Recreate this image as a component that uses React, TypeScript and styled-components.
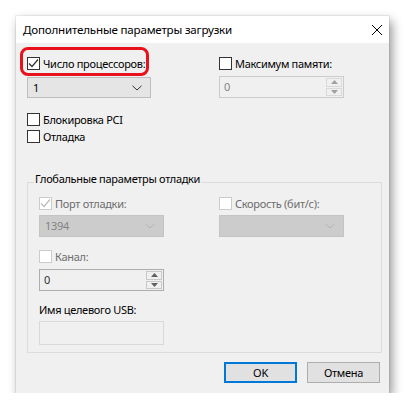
import React from "react";
import styled, { createGlobalStyle, css } from "styled-components";

const FS = "11px";
const LS = "-0.3px";

const GlobalStyle = createGlobalStyle`
  html, body { margin: 0; padding: 0; background: #ffffff; }
  body {
    font-family: "Noto Sans", "Open Sans", sans-serif;
    font-size: ${FS};
    letter-spacing: ${LS};
    color: #000;
    -webkit-font-smoothing: antialiased;
  }
`;

const DialogWindow = styled.div`
  position: relative;
  margin: 16px 0 0 16px;
  width: 373px;
  height: 377px;
  display: flex;
  flex-direction: column;
  background: #f0f0f0;
  box-shadow: 0 0 0 1px rgba(0, 0, 0, 0.06), 3px 5px 10px rgba(0, 0, 0, 0.42);
`;

const TitleBar = styled.div`
  height: 27px;
  flex: none;
  background: #ffffff;
  display: flex;
  align-items: center;
  justify-content: space-between;
  padding-left: 7px;
`;

const TitleText = styled.span`
  font-size: 11.6px;
  letter-spacing: -0.2px;
  line-height: 16px;
  color: #000;
`;

const CloseButton = styled.div`
  width: 24px;
  height: 27px;
  display: flex;
  align-items: center;
  justify-content: center;
`;

const Client = styled.div`
  flex: 1;
  display: flex;
  flex-direction: column;
  padding: 14px 8px 10px 11px;
`;

const ColumnsGrid = styled.div<{ $left: number; $right: number }>`
  display: grid;
  grid-template-columns: ${(p) => p.$left}px ${(p) => p.$right}px;
  align-items: start;
`;

const Column = styled.div`
  display: flex;
  flex-direction: column;
  align-items: flex-start;
`;

const Spaced = styled.div<{ $top: number }>`
  margin-top: ${(p) => p.$top}px;
  position: relative;
`;

const CheckRow = styled.label`
  display: flex;
  align-items: center;
  height: 13px;
  gap: 3px;
  white-space: nowrap;
`;

const Box = styled.span<{ $disabled?: boolean }>`
  box-sizing: border-box;
  width: 13px;
  height: 13px;
  flex: none;
  background: #ffffff;
  border: 1px solid ${(p) => (p.$disabled ? "#cccccc" : "#333333")};
  display: flex;
  align-items: center;
  justify-content: center;
`;

const CheckText = styled.span<{ $disabled?: boolean }>`
  font-size: ${FS};
  line-height: 16px;
  color: ${(p) => (p.$disabled ? "#6d6d6d" : "#000")};
`;

const Highlight = styled.div`
  position: absolute;
  left: -7px;
  top: -10px;
  width: 129px;
  height: 29px;
  box-sizing: border-box;
  border: 3px solid #e8121c;
  border-radius: 8px;
  pointer-events: none;
`;

const Combo = styled.div<{ $disabled?: boolean; $w: number; $h: number }>`
  box-sizing: border-box;
  width: ${(p) => p.$w}px;
  height: ${(p) => p.$h}px;
  display: flex;
  align-items: center;
  justify-content: space-between;
  padding: 0 8px 0 5px;
  ${(p) =>
    p.$disabled
      ? css`
          background: #cccccc;
          border: 1px solid #c4c4c4;
          color: #838383;
        `
      : css`
          background: #e5e5e5;
          border: 1px solid #bdbdbd;
          color: #000;
        `}
`;

const FieldText = styled.span`
  font-size: ${FS};
  line-height: 16px;
`;

const Spin = styled.div<{ $disabled?: boolean; $w: number; $h: number }>`
  box-sizing: border-box;
  width: ${(p) => p.$w}px;
  height: ${(p) => p.$h}px;
  display: flex;
  align-items: stretch;
  background: #f0f0f0;
  border: 1px solid ${(p) => (p.$disabled ? "#cccccc" : "#adadad")};
  color: ${(p) => (p.$disabled ? "#838383" : "#333")};
`;

const SpinValue = styled.div`
  flex: 1;
  display: flex;
  align-items: center;
  padding-left: 4px;
`;

const SpinButtons = styled.div`
  width: 16px;
  display: flex;
  flex-direction: column;
  gap: 1px;
  padding: 1px 1px 1px 0;
`;

const SpinButton = styled.div<{ $disabled?: boolean }>`
  flex: 1;
  display: flex;
  align-items: center;
  justify-content: center;
  background: #f0f0f0;
  border: 1px solid ${(p) => (p.$disabled ? "#d9d9d9" : "#c8c8c8")};
  box-sizing: border-box;
`;

const TextBox = styled.div`
  box-sizing: border-box;
  width: 125px;
  height: 24px;
  background: #f0f0f0;
  border: 1px solid #d9d9d9;
`;

const PlainLabel = styled.div`
  font-size: ${FS};
  line-height: 16px;
  color: #000;
`;

const GroupBox = styled.fieldset`
  box-sizing: border-box;
  width: 355px;
  margin: 28px 0 0 0;
  padding: 4px 0 7px 11px;
  border: 1px solid #dcdcdc;
  min-width: 0;
`;

const GroupLegend = styled.legend`
  margin-left: -5px;
  padding: 0 1px 6px;
  font-size: ${FS};
  line-height: 16px;
  color: #000;
`;

const ButtonBar = styled.div`
  margin-top: auto;
  display: flex;
  justify-content: flex-end;
  gap: 10px;
  padding-right: 1px;
`;

const DialogButton = styled.div<{ $default?: boolean }>`
  box-sizing: border-box;
  width: 73px;
  height: 21px;
  display: flex;
  align-items: center;
  justify-content: center;
  background: #e1e1e1;
  font-size: ${FS};
  color: #000;
  border: ${(p) => (p.$default ? "2px solid #0078d7" : "1px solid #adadad")};
`;

const CheckMark = ({ color }: { color: string }) => (
  <svg width="11" height="11" viewBox="0 0 11 11">
    <path d="M1 5.5 L4 8.5 L10 1.5" fill="none" stroke={color} strokeWidth="1.2" />
  </svg>
);

const Chevron = ({ color }: { color: string }) => (
  <svg width="10" height="6" viewBox="0 0 10 6">
    <path d="M0.5 0.8 L5 5 L9.5 0.8" fill="none" stroke={color} strokeWidth="1" />
  </svg>
);

const Tri = ({ up, color }: { up?: boolean; color: string }) => (
  <svg width="7" height="4" viewBox="0 0 7 4">
    <path d={up ? "M0 4 L3.5 0 L7 4 Z" : "M0 0 L3.5 4 L7 0 Z"} fill={color} />
  </svg>
);

type CheckProps = { label: string; checked?: boolean; disabled?: boolean };
const Check = ({ label, checked, disabled }: CheckProps) => (
  <CheckRow>
    <Box $disabled={disabled}>
      {checked && <CheckMark color={disabled ? "#bcbcbc" : "#333"} />}
    </Box>
    <CheckText $disabled={disabled}>{label}</CheckText>
  </CheckRow>
);

const SpinBox = ({ value, disabled, w, h }: { value: string; disabled?: boolean; w: number; h: number }) => (
  <Spin $disabled={disabled} $w={w} $h={h}>
    <SpinValue>
      <FieldText>{value}</FieldText>
    </SpinValue>
    <SpinButtons>
      <SpinButton $disabled={disabled}>
        <Tri up color={disabled ? "#a0a0a0" : "#606060"} />
      </SpinButton>
      <SpinButton $disabled={disabled}>
        <Tri color={disabled ? "#a0a0a0" : "#606060"} />
      </SpinButton>
    </SpinButtons>
  </Spin>
);

export default function App() {
  return (
    <>
      <GlobalStyle />
      <DialogWindow>
        <TitleBar>
          <TitleText>Дополнительные параметры загрузки</TitleText>
          <CloseButton>
            <svg width="10" height="10" viewBox="0 0 10 10">
              <path d="M0 0 L10 10 M10 0 L0 10" stroke="#000" strokeWidth="1" />
            </svg>
          </CloseButton>
        </TitleBar>
        <Client>
          <ColumnsGrid $left={192} $right={125}>
            <Column>
              <Spaced $top={0}>
                <Check label="Число процессоров:" checked />
                <Highlight />
              </Spaced>
              <Spaced $top={7}>
                <Combo $w={124} $h={21}>
                  <FieldText>1</FieldText>
                  <Chevron color="#333" />
                </Combo>
              </Spaced>
              <Spaced $top={15}>
                <Check label="Блокировка PCI" />
              </Spaced>
              <Spaced $top={4}>
                <Check label="Отладка" />
              </Spaced>
            </Column>
            <Column>
              <Check label="Максимум памяти:" />
              <Spaced $top={6}>
                <SpinBox value="0" disabled w={125} h={22} />
              </Spaced>
            </Column>
          </ColumnsGrid>

          <GroupBox>
            <GroupLegend>Глобальные параметры отладки</GroupLegend>
            <ColumnsGrid $left={180} $right={125}>
              <Column>
                <Check label="Порт отладки:" checked disabled />
                <Spaced $top={5}>
                  <Combo $disabled $w={125} $h={22}>
                    <FieldText>1394</FieldText>
                    <Chevron color="#b5b5b5" />
                  </Combo>
                </Spaced>
                <Spaced $top={13}>
                  <Check label="Канал:" disabled />
                </Spaced>
                <Spaced $top={6}>
                  <SpinBox value="0" w={125} h={22} />
                </Spaced>
                <Spaced $top={11}>
                  <PlainLabel>Имя целевого USB:</PlainLabel>
                </Spaced>
                <Spaced $top={3}>
                  <TextBox />
                </Spaced>
              </Column>
              <Column>
                <Check label="Скорость (бит/с):" disabled />
                <Spaced $top={5}>
                  <Combo $disabled $w={125} $h={22}>
                    <FieldText />
                    <Chevron color="#b5b5b5" />
                  </Combo>
                </Spaced>
              </Column>
            </ColumnsGrid>
          </GroupBox>

          <ButtonBar>
            <DialogButton $default>OK</DialogButton>
            <DialogButton>Отмена</DialogButton>
          </ButtonBar>
        </Client>
      </DialogWindow>
    </>
  );
}
